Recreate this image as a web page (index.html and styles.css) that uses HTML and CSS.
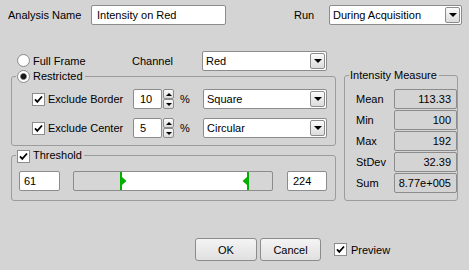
FILE: index.html
```html
<!DOCTYPE html>
<html lang="en">
<head>
    <meta charset="UTF-8">
    <meta name="viewport" content="width=device-width, initial-scale=1.0">
    <title>Intensity Analysis</title>
    <link rel="stylesheet" href="styles.css">
</head>
<body>
    <div class="dialog">
        <div class="topRow">
            <span>Analysis Name</span>
            <div class="field nameField">Intensity on Red</div>
            <span></span>
            <span>Run</span>
            <div class="combo runCombo"><span>During Acquisition</span><i class="drop"></i></div>
        </div>

        <div class="main">
            <div class="leftCol">
                <div class="frameRow">
                    <label class="option"><i class="radio"></i>Full Frame</label>
                    <span>Channel</span>
                    <div class="combo"><span>Red</span><i class="drop"></i></div>
                </div>

                <fieldset class="group restricted">
                    <legend><i class="radio checked"></i>Restricted</legend>
                    <div class="rows">
                        <label class="option"><i class="check on"></i>Exclude Border</label>
                        <div class="spin"><div class="field">10</div><div class="spinBtns"><i class="up"></i><i class="down"></i></div></div>
                        <span class="pct">%</span>
                        <div class="combo"><span>Square</span><i class="drop"></i></div>

                        <label class="option"><i class="check on"></i>Exclude Center</label>
                        <div class="spin"><div class="field">5</div><div class="spinBtns"><i class="up"></i><i class="down"></i></div></div>
                        <span class="pct">%</span>
                        <div class="combo"><span>Circular</span><i class="drop"></i></div>
                    </div>
                </fieldset>

                <fieldset class="group threshold">
                    <legend><i class="check on"></i>Threshold</legend>
                    <div class="thresholdRow">
                        <div class="field lowField">61</div>
                        <div class="slider">
                            <div class="outside" style="width: 46px"></div>
                            <svg class="handle" width="7" height="18" viewBox="0 0 7 18">
                                <rect x="0" y="0" width="2" height="18" fill="#00b000"/>
                                <polygon points="2,5 6.5,9 2,13" fill="#00b000"/>
                            </svg>
                            <div class="inside"></div>
                            <svg class="handle" width="7" height="18" viewBox="0 0 7 18">
                                <rect x="5" y="0" width="2" height="18" fill="#00b000"/>
                                <polygon points="5,5 0.5,9 5,13" fill="#00b000"/>
                            </svg>
                            <div class="outside" style="width: 23px"></div>
                        </div>
                        <div class="field highField">224</div>
                    </div>
                </fieldset>
            </div>

            <fieldset class="group measure">
                <legend>Intensity Measure</legend>
                <div class="stats">
                    <span>Mean</span><div class="value">113.33</div>
                    <span>Min</span><div class="value">100</div>
                    <span>Max</span><div class="value">192</div>
                    <span>StDev</span><div class="value">32.39</div>
                    <span>Sum</span><div class="value">8.77e+005</div>
                </div>
            </fieldset>
        </div>

        <div class="buttons">
            <button class="btn okBtn">OK</button>
            <button class="btn cancelBtn">Cancel</button>
            <label class="option preview"><i class="check on"></i>Preview</label>
        </div>
    </div>
</body>
</html>
```

FILE: styles.css
```css
* {
    box-sizing: border-box;
}
body {
    margin: 0;
    background: #d4d4d4;
    font-family: "Liberation Sans", Arial, sans-serif;
    font-size: 11px;
    color: #000;
    overflow: hidden;
}
.dialog {
    width: 469px;
    height: 270px;
    padding: 4px 0 0 8px;
}
.topRow {
    display: grid;
    grid-template-columns: 83px 135px 68px 35px 133px;
    align-items: center;
    height: 21px;
}
.field {
    display: flex;
    align-items: center;
    height: 20px;
    padding: 0 5px;
    background: #fff;
    border: 1px solid #8c8c8c;
    border-radius: 2px;
}
.combo {
    display: flex;
    align-items: center;
    height: 20px;
    padding: 0 1px 0 3px;
    background: #fff;
    border: 1px solid #8c8c8c;
    border-radius: 2px;
}
.runCombo {
    margin-top: 1px;
}
.combo span {
    flex: 1;
}
.drop {
    display: flex;
    align-items: center;
    justify-content: center;
    width: 15px;
    height: 16px;
    border: 1px solid #8c8c8c;
    border-radius: 2px;
    background: linear-gradient(#fbfbfb, #dcdcdc);
}
.drop::after {
    content: "";
    border-left: 4px solid transparent;
    border-right: 4px solid transparent;
    border-top: 4px solid #000;
}
.main {
    display: flex;
    align-items: flex-start;
    margin: 25px 0 0 3px;
}
.leftCol {
    width: 325px;
}
.frameRow {
    display: grid;
    grid-template-columns: 115px 70px 125px;
    align-items: center;
    height: 19px;
    padding-left: 6px;
}
.frameRow .combo {
    margin-top: 1px;
}
.option {
    display: flex;
    align-items: center;
    white-space: nowrap;
}
.radio {
    width: 13px;
    height: 13px;
    margin-right: 3px;
    border: 1px solid #8c8c8c;
    border-radius: 50%;
    background: radial-gradient(circle, #ffffff 55%, #ececec 100%);
}
.radio.checked {
    background: radial-gradient(circle, #1a1a1a 0, #1a1a1a 2.4px, #9a9a9a 3.2px, #ffffff 3.8px);
}
.check {
    width: 13px;
    height: 13px;
    margin-right: 3px;
    border: 1px solid #8c8c8c;
    background: #fff;
}
.check.on {
    background: #fff url("data:image/svg+xml,%3Csvg xmlns='http://www.w3.org/2000/svg' width='11' height='11'%3E%3Cpath d='M2 5.3 L4.3 7.8 L9 2.5' fill='none' stroke='%23000' stroke-width='1.8'/%3E%3C/svg%3E") no-repeat center;
}
.group {
    margin: 0;
    padding: 0;
    min-width: 0;
    border: 1px solid #9c9c9c;
    border-radius: 3px;
}
.group legend {
    display: flex;
    align-items: center;
    height: 14px;
    margin-left: 4px;
    padding: 0 2px 0 1px;
}
.restricted {
    width: 325px;
}
.rows {
    display: grid;
    grid-template-columns: 101px 41px 29px 124px;
    grid-auto-rows: 20px;
    row-gap: 9px;
    align-items: center;
    padding: 6px 0 7px 20px;
}
.spin {
    display: flex;
    gap: 1px;
    height: 20px;
}
.spin .field {
    width: 29px;
    padding-left: 6px;
}
.spinBtns {
    display: flex;
    flex-direction: column;
    width: 11px;
}
.spinBtns i {
    display: flex;
    align-items: center;
    justify-content: center;
    height: 10px;
    border: 1px solid #8c8c8c;
    border-radius: 2px;
    background: linear-gradient(#fbfbfb, #dcdcdc);
}
.spinBtns .up::after {
    content: "";
    border-left: 3px solid transparent;
    border-right: 3px solid transparent;
    border-bottom: 3px solid #000;
}
.spinBtns .down::after {
    content: "";
    border-left: 3px solid transparent;
    border-right: 3px solid transparent;
    border-top: 3px solid #000;
}
.pct {
    padding-left: 6px;
}
.threshold {
    width: 325px;
    margin-top: 2px;
}
.threshold legend .check {
    margin-top: 3px;
}
.thresholdRow {
    display: flex;
    align-items: center;
    padding: 9px 0 9px 7px;
}
.lowField {
    width: 41px;
    padding-left: 4px;
}
.slider {
    display: flex;
    width: 200px;
    height: 20px;
    margin: 0 14px 0 13px;
    border: 1px solid #8c8c8c;
    border-radius: 2px;
    background: #d6d6d6;
    overflow: hidden;
}
.handle {
    display: block;
    background: #fff;
}
.inside {
    width: 115px;
    background: #fff;
}
.highField {
    width: 40px;
}
.measure {
    width: 114px;
    margin: 18px 0 0 8px;
}
.measure legend {
    margin-left: 4px;
}
.stats {
    display: grid;
    grid-template-columns: 38px 63px;
    grid-auto-rows: 20px;
    row-gap: 1px;
    align-items: center;
    padding: 7px 0 7px 11px;
}
.value {
    display: flex;
    align-items: center;
    justify-content: flex-end;
    height: 20px;
    padding-right: 5px;
    border: 1px solid #8c8c8c;
    border-radius: 2px;
}
.buttons {
    display: flex;
    align-items: center;
    margin-top: 37px;
    padding-left: 187px;
}
.btn {
    height: 23px;
    padding: 0;
    font: inherit;
    color: #000;
    border: 1px solid #8c8c8c;
    border-radius: 3px;
    background: linear-gradient(#f4f4f4, #e0e0e0);
}
.okBtn {
    width: 62px;
}
.cancelBtn {
    width: 61px;
    margin-left: 3px;
}
.preview {
    margin-left: 13px;
}
.preview .check {
    margin-right: 4px;
}
```
